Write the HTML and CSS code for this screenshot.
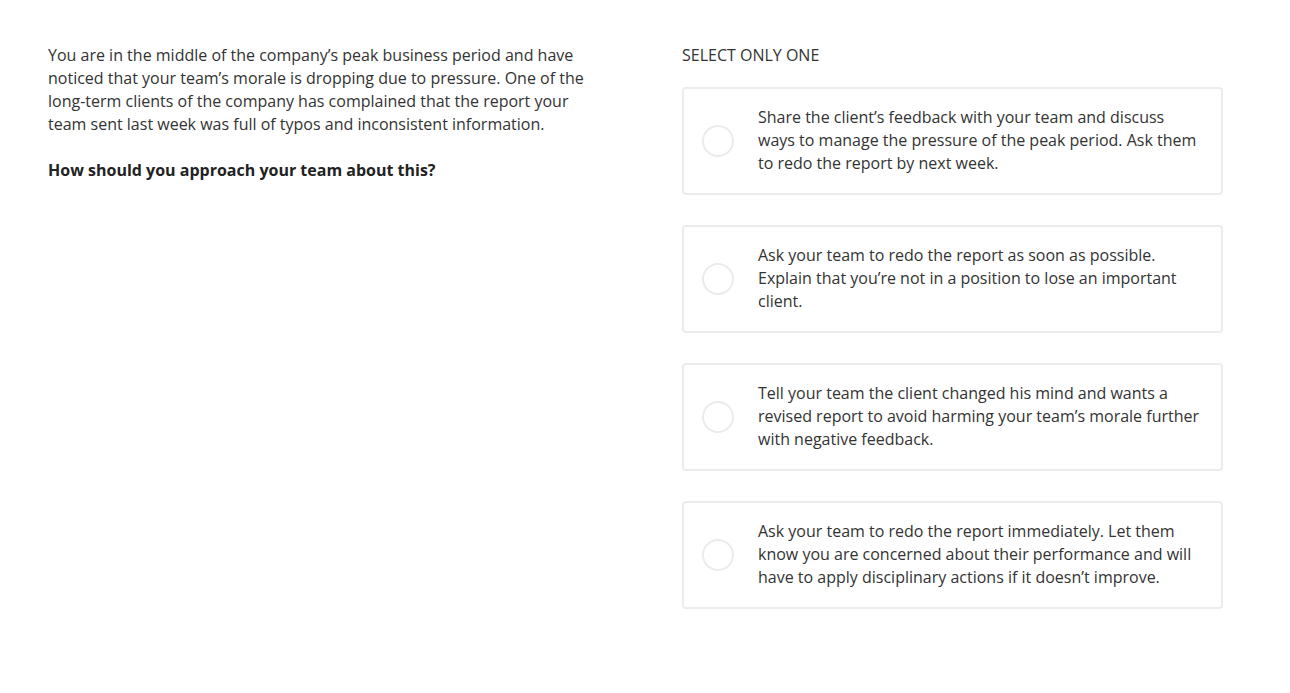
FILE: index.html
```html
<!DOCTYPE html>
<html>
<head>
<meta charset="utf-8">
<link rel="stylesheet" href="styles.css">
</head>
<body>
<div class="page">
  <div class="question">
    <p class="scenario">You are in the middle of the company’s peak business period and have noticed that your team’s morale is dropping due to pressure. One of the long-term clients of the company has complained that the report your team sent last week was full of typos and inconsistent information.</p>
    <p class="prompt">How should you approach your team about this?</p>
  </div>
  <div class="answers">
    <div class="label">SELECT ONLY ONE</div>
    <div class="options">
      <div class="option"><span class="radio"></span><span class="text">Share the client’s feedback with your team and discuss ways to manage the pressure of the peak period. Ask them to redo the report by next week.</span></div>
      <div class="option"><span class="radio"></span><span class="text">Ask your team to redo the report as soon as possible. Explain that you’re not in a position to lose an important client.</span></div>
      <div class="option"><span class="radio"></span><span class="text">Tell your team the client changed his mind and wants a revised report to avoid harming your team’s morale further with negative feedback.</span></div>
      <div class="option"><span class="radio"></span><span class="text">Ask your team to redo the report immediately. Let them know you are concerned about their performance and will have to apply disciplinary actions if it doesn’t improve.</span></div>
    </div>
  </div>
</div>
</body>
</html>
```
FILE: styles.css
```css
html, body {
  margin: 0;
  padding: 0;
  background: #ffffff;
}
body {
  font-family: "Open Sans", "Liberation Sans", sans-serif;
  font-size: 16px;
  line-height: 23px;
  color: #333333;
}
.page {
  display: grid;
  grid-template-columns: 540px 541px;
  column-gap: 94px;
  padding: 44px 48px;
}
.question p {
  margin: 0;
}
.scenario {
  margin-bottom: 23px !important;
}
.prompt {
  font-weight: 700;
  color: #222222;
}
.label {
  text-transform: uppercase;
  margin-bottom: 20px;
}
.options {
  display: flex;
  flex-direction: column;
  gap: 30px;
}
.option {
  display: flex;
  align-items: center;
  gap: 24px;
  border: 2px solid #ececec;
  border-radius: 4px;
  padding: 17px 20px 18px 18px;
}
.radio {
  flex: none;
  width: 28px;
  height: 28px;
  border: 2px solid #ebebeb;
  border-radius: 50%;
}
.text {
  flex: 1;
}
```
